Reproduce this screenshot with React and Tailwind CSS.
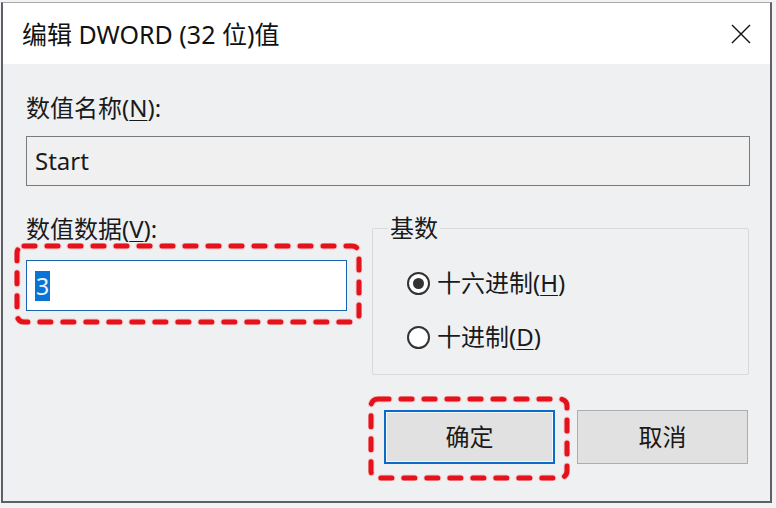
import React from "react";

function DashBox({ w, h, className }) {
  return (
    <svg
      width={w}
      height={h}
      className={"absolute pointer-events-none " + className}
      viewBox={`0 0 ${w} ${h}`}
    >
      <rect
        x="3"
        y="3"
        width={w - 6}
        height={h - 6}
        rx="7"
        fill="none"
        stroke="#f7b3b5"
        strokeWidth="7"
        strokeDasharray="11 12"
        strokeLinecap="round"
        opacity="0.6"
      />
      <rect
        x="3"
        y="3"
        width={w - 6}
        height={h - 6}
        rx="7"
        fill="none"
        stroke="#e3121b"
        strokeWidth="5"
        strokeDasharray="11 12"
        strokeLinecap="round"
      />
    </svg>
  );
}

function Radio({ checked, label, mn }) {
  return (
    <div className="flex items-center h-[30px]">
      <span className="w-[23px] h-[23px] rounded-full border-2 border-[#333333] bg-white flex items-center justify-center">
        {checked && <span className="w-[11px] h-[11px] rounded-full bg-[#333333]" />}
      </span>
      <span className="ml-[7px] text-[24px] leading-[30px] text-[#1a1a1a]">
        {label}(<span className="underline underline-offset-[3px] decoration-1">{mn}</span>)
      </span>
    </div>
  );
}

export default function App() {
  return (
    <div className="w-[776px] h-[508px] bg-[#f3f3f3] pt-[2px] pl-[1px] font-['Noto_Sans','Noto_Sans_CJK_SC',sans-serif] overflow-hidden">
      <div className="w-[771px] h-[501px] border-l-2 border-r-2 border-b-2 border-t border-[#5f5f6a] border-t-[#a8a8a8] bg-[#eff0f2] flex flex-col">
        {/* title bar */}
        <div className="h-[61px] bg-white flex items-center justify-between pl-[19px] pr-[19px]">
          <span className="text-[25px] leading-[30px] text-[#111]">编辑 DWORD (32 位)值</span>
          <svg width="20" height="20" viewBox="0 0 20 20">
            <path d="M1 1 L19 19 M19 1 L1 19" stroke="#111" strokeWidth="1.4" fill="none" />
          </svg>
        </div>
        {/* body */}
        <div className="flex flex-col pl-[23px] pr-[20px]">
          <div className="mt-[29px] h-[30px] text-[24px] leading-[30px] text-[#1a1a1a]">
            数值名称(<span className="underline underline-offset-[3px] decoration-1">N</span>):
          </div>
          <div className="mt-[13px] h-[50px] border border-[#7a7a7a] bg-[#f0f0f0] flex items-center pl-[8px] text-[24px] text-[#1a1a1a]">
            Start
          </div>
          <div className="flex">
            <div className="w-[321px] flex flex-col">
              <div className="mt-[28px] h-[30px] text-[24px] leading-[30px] text-[#1a1a1a]">
                数值数据(<span className="underline underline-offset-[3px] decoration-1">V</span>):
              </div>
              <div className="relative mt-[16px]">
                <div className="h-[51px] border border-[#1763b0] bg-white flex items-center pl-[8px]">
                  <span className="bg-[#0a74d4] text-[#e6f2ff] text-[23px] leading-[30px] px-[1px]">3</span>
                </div>
                <DashBox w={348} h={82} className="-left-[12px] -top-[17px]" />
              </div>
            </div>
            <fieldset className="ml-[25px] mr-[1px] flex-1 mt-[27px] h-[162px] border border-[#d8d9dc] rounded-[2px] pl-[15px]">
              <legend className="px-[2px] text-[24px] leading-[30px] text-[#1a1a1a]">基数</legend>
              <div className="pl-[19px] pt-[25px] flex flex-col gap-[24px]">
                <Radio checked label="十六进制" mn="H" />
                <Radio label="十进制" mn="D" />
              </div>
            </fieldset>
          </div>
          <div className="mt-[35px] flex justify-end gap-[22px] pr-[2px]">
            <div className="relative">
              <div className="w-[171px] h-[54px] border-2 border-[#0a6cc8] bg-[#e1e1e1] flex items-center justify-center text-[24px] text-[#1a1a1a] shadow-[inset_0_0_0_1px_#f4f8fc]">
                确定
              </div>
              <DashBox w={202} h={85} className="-left-[16px] -top-[14px]" />
            </div>
            <div className="w-[171px] h-[54px] border border-[#adadad] bg-[#e1e1e1] flex items-center justify-center text-[24px] text-[#1a1a1a]">
              取消
            </div>
          </div>
        </div>
      </div>
    </div>
  );
}
